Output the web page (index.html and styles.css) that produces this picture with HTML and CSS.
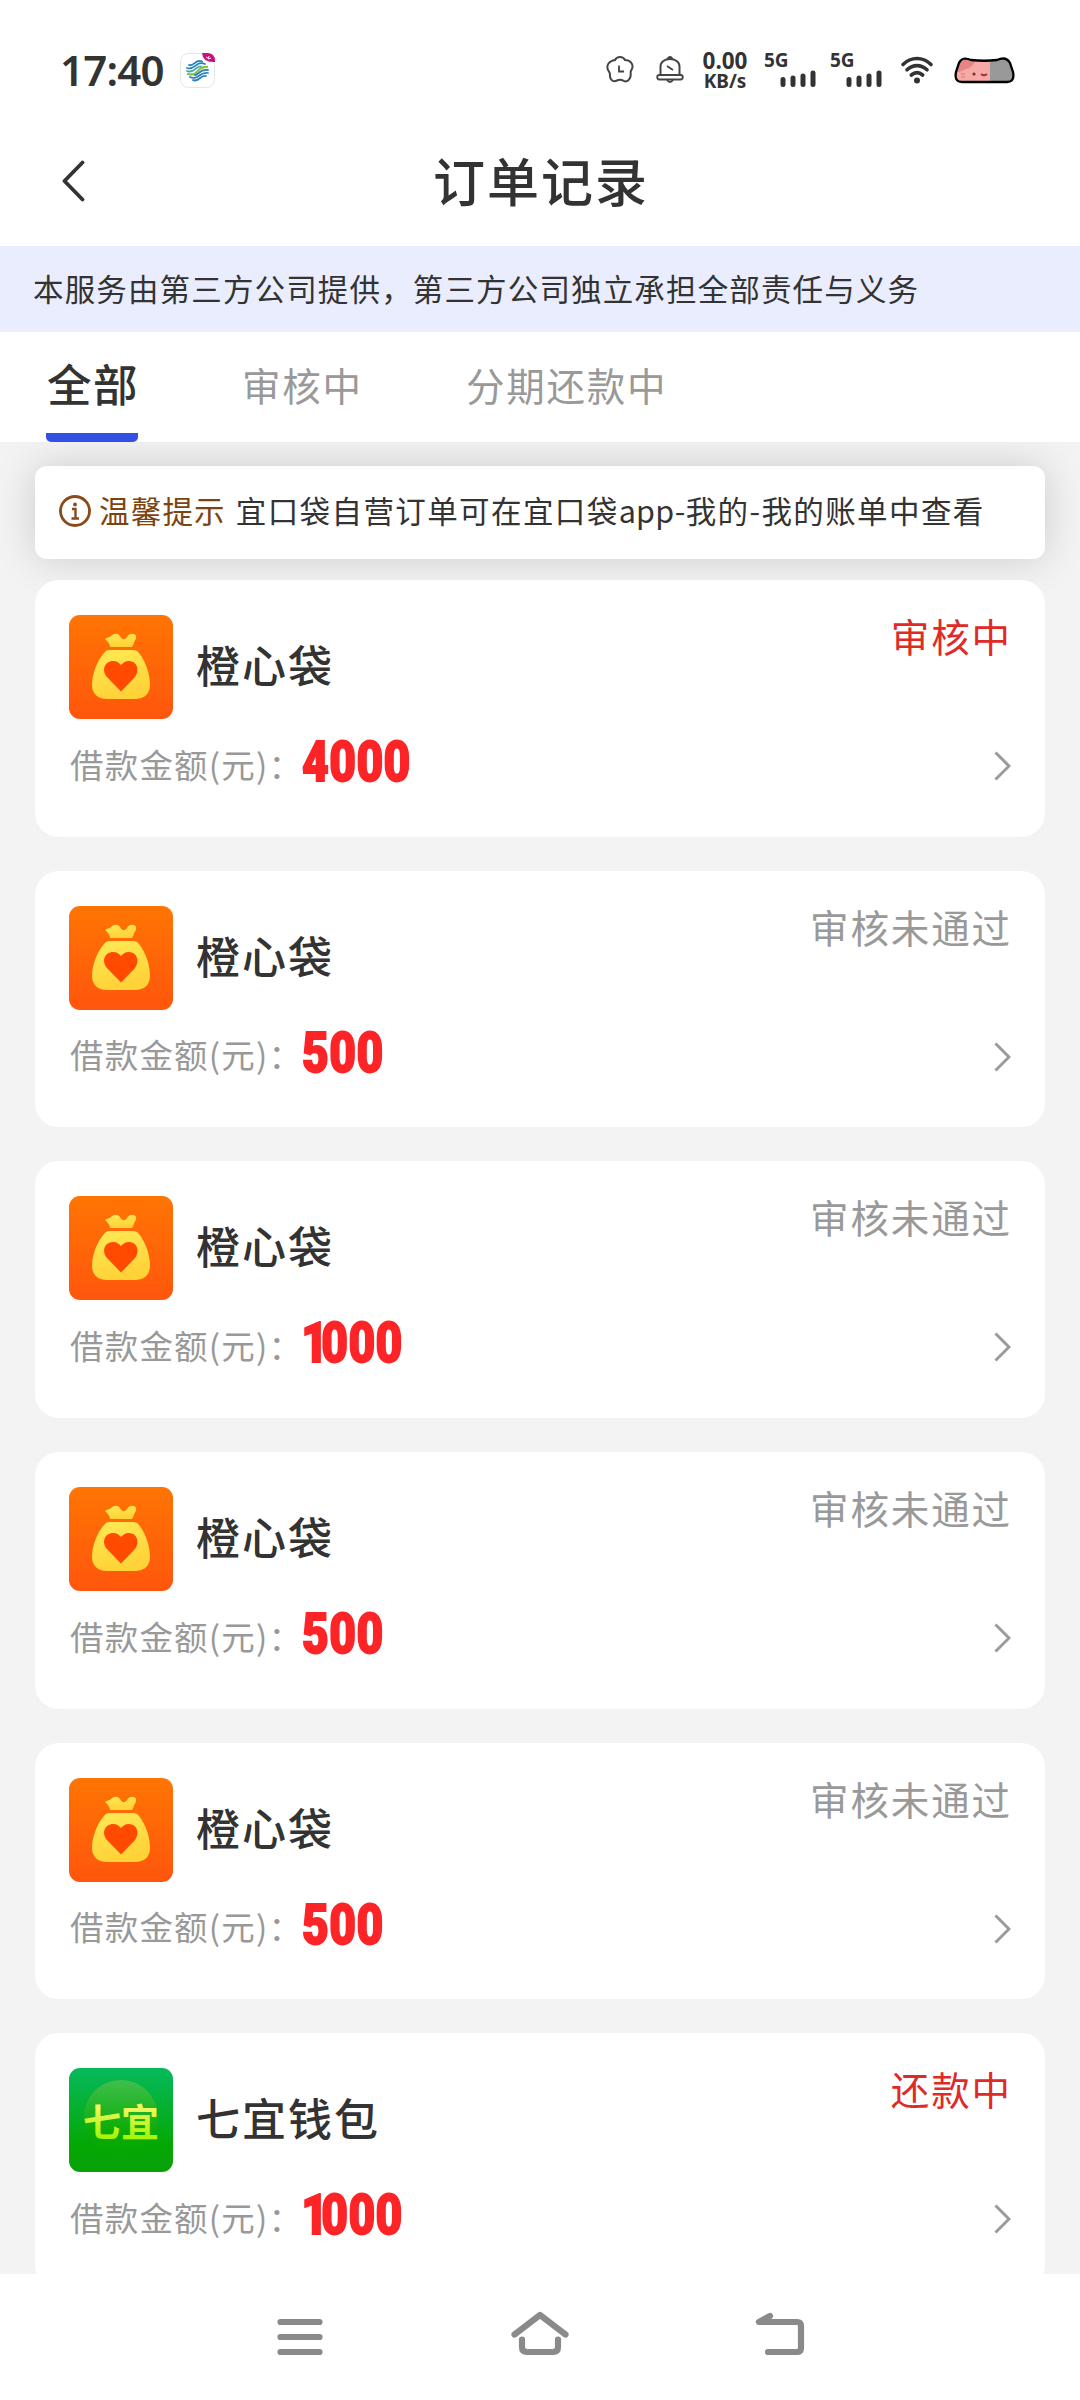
FILE: index.html
```html
<!DOCTYPE html>
<html lang="zh-CN">
<head>
    <meta charset="UTF-8">
    <meta name="viewport" content="width=device-width, initial-scale=1.0">
    <title>订单记录</title>
    <link rel="stylesheet" href="styles.css">
</head>
<body>
    <!-- shared icons -->
    <svg class="defs" width="0" height="0">
        <defs>
            <linearGradient id="orangeBg" x1="0" y1="0" x2="0" y2="1">
                <stop offset="0" stop-color="#ff7503"/>
                <stop offset="1" stop-color="#ff560d"/>
            </linearGradient>
            <linearGradient id="gold" x1="0" y1="0" x2="0.3" y2="1">
                <stop offset="0" stop-color="#ffea55"/>
                <stop offset="1" stop-color="#ffd238"/>
            </linearGradient>
            <linearGradient id="greenBg" x1="0" y1="0" x2="0" y2="1">
                <stop offset="0" stop-color="#06b95c"/>
                <stop offset="0.75" stop-color="#04a803"/>
                <stop offset="1" stop-color="#0aa00c"/>
            </linearGradient>
            <linearGradient id="greenBall" x1="0" y1="0" x2="0" y2="1">
                <stop offset="0" stop-color="#3fbf4c"/>
                <stop offset="0.7" stop-color="#0cab06"/>
                <stop offset="1" stop-color="#04a803"/>
            </linearGradient>
            <linearGradient id="lime" x1="0" y1="0" x2="0" y2="1">
                <stop offset="0.2" stop-color="#fbf96a"/>
                <stop offset="0.8" stop-color="#a8f50a"/>
            </linearGradient>
        </defs>
        <symbol id="bag" viewBox="0 0 104 104">
            <rect width="104" height="104" rx="11" fill="url(#orangeBg)"/>
            <path d="M36 24C38 22 40 23 42 21C45 18 49 18 51 21C53 25 56 25 58 22C60 18 66 18 67 21C68 24 65 26 65 28L63 32H41C41 29 39 27 36 24Z" fill="url(#gold)"/>
            <path d="M40 35H64Q68 35 70 38C77 47 81 59 81 70C81 79 75 84 66 84H38C28 84 23 78 23 70C23 59 28 46 35 38Q37 35 40 35Z" fill="url(#gold)"/>
            <path d="M52 76.500L38 62C32 55 36 46 44 46C48 46 50 48 52 50C54 48 56 46 60 46C68 46 71 55 66 62Z" fill="#ff4a00"/>
        </symbol>
        <symbol id="arrow" viewBox="0 0 17 30">
            <path d="M1.500 1.500L15 15L1.500 28.500" fill="none" stroke="#9b9b9b" stroke-width="3"/>
        </symbol>
        <symbol id="signal" viewBox="0 0 36 17">
            <path d="M3 9.500V14.500M13 8V14.500M23 6V14.500M33 3V14.500" fill="none" stroke="#333" stroke-width="5" stroke-linecap="round"/>
        </symbol>
    </svg>

    <div class="status-bar">
        <span class="time">17:40</span>
        <svg class="carrier" viewBox="0 0 35 35">
            <rect x="0.500" y="0.500" width="34" height="34" rx="8" fill="#fff" stroke="#e6e6e6"/>
            <path d="M22 0H27Q35 0 35 8V9Q23 10 22 0Z" fill="#c9107f"/>
            <path d="M26 4L28 5M29 3L28 6L31 5" stroke="#fff" stroke-width="0.900" fill="none"/>
            <g fill="none" stroke-width="1.800" stroke-linecap="round">
                <path d="M9 12C14 14 16 5 22 8.500" stroke="#2483bd"/>
                <path d="M7 15C15 18 16 7 25 11" stroke="#2483bd"/>
                <path d="M7 18C15 21 16 12 21 13.500" stroke="#4ea2b0"/>
                <path d="M8 21C19 24 16 13 27 14" stroke="#8ac43c" stroke-width="2.300"/>
                <path d="M15 22C19 22 19 16 28 17" stroke="#2483bd"/>
                <path d="M10 24C18 28 20 18 28 20" stroke="#2483bd"/>
                <path d="M13 27C18 30 21 21 26 23" stroke="#2483bd"/>
            </g>
        </svg>

        <div class="status-icons">
            <svg class="alarm" viewBox="0 0 28 28">
                <path d="M9 4C11 0 17 0 19 4C24 4 28 8 26 13C23 16 26 18 24 22C22 26 19 26 17 24.500C15 23.500 13 23.500 11 24.500C8 26 5 25 4 21C4 17 4 17 2 14C0 9 3 5 9 4Z" fill="none" stroke="#444" stroke-width="2"/>
                <path d="M13 9.500V15.500H18" fill="none" stroke="#444" stroke-width="1.800"/>
            </svg>
            <svg class="bell" viewBox="0 0 28 28">
                <path d="M4.500 19V10.500C4.500 6 9 3 14 3C19 3 23.500 6 23.500 10.500V19M11.500 3Q14 -1 16.500 3M11 24Q14 28 17 24" fill="none" stroke="#444" stroke-width="2"/>
                <rect x="1.200" y="19" width="25.600" height="4.500" rx="2.200" fill="none" stroke="#444" stroke-width="1.800"/>
                <path d="M11 10L17 14" stroke="#444" stroke-width="1.800"/>
            </svg>
            <div class="speed"><b>0.00</b><i>KB/s</i></div>
            <div class="sim"><b>5G</b><svg><use href="#signal"/></svg></div>
            <div class="sim"><b>5G</b><svg><use href="#signal"/></svg></div>
            <svg class="wifi" viewBox="0 0 34 28">
                <path d="M3 8.500C11 0.500 23 0.500 31 8.500M7 13.800C13 8.200 21 8.200 27 13.800M11.300 19C15 15.900 19 15.900 22.700 19" fill="none" stroke="#333" stroke-width="3.600" stroke-linecap="round"/>
                <circle cx="17" cy="24.500" r="3" fill="#333"/>
            </svg>
            <svg class="battery" viewBox="0 0 61 27">
                <clipPath id="cat"><path d="M5 6Q8 -1 17 3Q30 4.500 43 3Q52 -1 56 6L59 15Q61 25 53 25H8Q0 25 2 15Z"/></clipPath>
                <g clip-path="url(#cat)">
                    <rect width="61" height="27" fill="#f6aaa8"/>
                    <path d="M0 0H22Q21 10 12 12Q5 15 0 17Z" fill="#e78489"/>
                    <rect x="36" width="25" height="27" fill="#999"/>
                </g>
                <circle cx="20" cy="17" r="1.600" fill="#8d2b25"/>
                <path d="M27 17Q30 19.500 33 17" stroke="#a8373f" stroke-width="2.200" fill="none"/>
                <path d="M7 17H11M7 20H11" stroke="#e78489" stroke-width="1.500"/>
                <path d="M5 6Q8 -1 17 3Q30 4.500 43 3Q52 -1 56 6L59 15Q61 25 53 25H8Q0 25 2 15Z" fill="none" stroke="#000" stroke-width="2.300"/>
            </svg>
        </div>
    </div>

    <header class="header">
        <svg class="back" viewBox="0 0 24 42">
            <path d="M21.500 2.500L3.500 21L21.500 39.500" fill="none" stroke="#333" stroke-width="3.800" stroke-linecap="round" stroke-linejoin="round"/>
        </svg>
        <h1>订单记录</h1>
    </header>

    <p class="notice">本服务由第三方公司提供，第三方公司独立承担全部责任与义务</p>

    <nav class="tabs">
        <a class="tab active">全部</a>
        <a class="tab">审核中</a>
        <a class="tab">分期还款中</a>
    </nav>

    <main class="content">
        <div class="tip">
            <svg class="info" viewBox="0 0 32 32">
                <circle cx="16" cy="16" r="14.500" fill="none" stroke="#8a4a1c" stroke-width="2.800"/>
                <circle cx="16" cy="9.500" r="1.900" fill="#8a4a1c"/>
                <path d="M13 14H16.500V23M12.500 23.500H20" fill="none" stroke="#8a4a1c" stroke-width="2.400"/>
            </svg>
            <b>温馨提示</b>
            <span>宜口袋自营订单可在宜口袋<span class="latin">app-</span>我的-我的账单中查看</span>
        </div>

        <div class="orders">
            <section class="order">
                <div class="order-top">
                    <svg class="logo"><use href="#bag"/></svg>
                    <h2>橙心袋</h2>
                    <span class="state red">审核中</span>
                </div>
                <div class="order-bottom">
                    <span class="label">借款金额(元)：</span>
                    <span class="amount">4000</span>
                    <svg class="arrow"><use href="#arrow"/></svg>
                </div>
            </section>

            <section class="order">
                <div class="order-top">
                    <svg class="logo"><use href="#bag"/></svg>
                    <h2>橙心袋</h2>
                    <span class="state">审核未通过</span>
                </div>
                <div class="order-bottom">
                    <span class="label">借款金额(元)：</span>
                    <span class="amount">500</span>
                    <svg class="arrow"><use href="#arrow"/></svg>
                </div>
            </section>

            <section class="order">
                <div class="order-top">
                    <svg class="logo"><use href="#bag"/></svg>
                    <h2>橙心袋</h2>
                    <span class="state">审核未通过</span>
                </div>
                <div class="order-bottom">
                    <span class="label">借款金额(元)：</span>
                    <span class="amount"><span class="one">1</span>000</span>
                    <svg class="arrow"><use href="#arrow"/></svg>
                </div>
            </section>

            <section class="order">
                <div class="order-top">
                    <svg class="logo"><use href="#bag"/></svg>
                    <h2>橙心袋</h2>
                    <span class="state">审核未通过</span>
                </div>
                <div class="order-bottom">
                    <span class="label">借款金额(元)：</span>
                    <span class="amount">500</span>
                    <svg class="arrow"><use href="#arrow"/></svg>
                </div>
            </section>

            <section class="order">
                <div class="order-top">
                    <svg class="logo"><use href="#bag"/></svg>
                    <h2>橙心袋</h2>
                    <span class="state">审核未通过</span>
                </div>
                <div class="order-bottom">
                    <span class="label">借款金额(元)：</span>
                    <span class="amount">500</span>
                    <svg class="arrow"><use href="#arrow"/></svg>
                </div>
            </section>

            <section class="order">
                <div class="order-top">
                    <svg class="logo" viewBox="0 0 104 104">
                        <rect width="104" height="104" rx="11" fill="url(#greenBg)"/>
                        <circle cx="52" cy="49" r="37" fill="url(#greenBall)"/>
                        <text class="logo-text" x="14" y="68" fill="url(#lime)">七宜</text>
                    </svg>
                    <h2>七宜钱包</h2>
                    <span class="state red">还款中</span>
                </div>
                <div class="order-bottom">
                    <span class="label">借款金额(元)：</span>
                    <span class="amount"><span class="one">1</span>000</span>
                    <svg class="arrow"><use href="#arrow"/></svg>
                </div>
            </section>
        </div>
    </main>

    <footer class="nav-bar">
        <svg viewBox="0 0 60 50">
            <path d="M10.500 12H49.500M10.500 27H49.500M10.500 42H49.500"/>
        </svg>
        <svg viewBox="0 0 60 50">
            <path d="M4.500 24.500L30 5L55.500 24.500M12 29.500V37Q12 42 17 42H43Q48 42 48 37V29.500"/>
        </svg>
        <svg viewBox="0 0 60 50">
            <path d="M20 6L9 12H47Q51 12 51 16V38Q51 42 47 42H18"/>
        </svg>
    </footer>
</body>
</html>
```
FILE: styles.css
```css
* {
    box-sizing: border-box;
}

body {
    margin: 0;
    height: 2400px;
    display: flex;
    flex-direction: column;
    overflow: hidden;
    background: #fff;
    color: #333;
    font-family: "Noto Sans CJK SC", sans-serif;
}

h1, h2, p {
    margin: 0;
    font-weight: 500;
}

svg {
    display: block;
    flex-shrink: 0;
}

.defs {
    position: absolute;
}

/* status bar */
.status-bar {
    height: 116px;
    padding: 24px 65px 0 60px;
    display: flex;
    align-items: center;
    font-family: "Noto Sans", sans-serif;
}

.time {
    font-size: 42px;
    font-weight: 600;
    line-height: 60px;
    width: 120px;
    letter-spacing: -0.8px;
}

.carrier {
    width: 35px;
    height: 35px;
}

.status-icons {
    margin-left: auto;
    display: flex;
    align-items: center;
}

.alarm {
    width: 28px;
    height: 28px;
    margin-right: 22px;
}

.bell {
    width: 28px;
    height: 28px;
    margin-right: 17px;
}

.speed {
    width: 48px;
    height: 43px;
    margin-right: 15px;
    display: flex;
    flex-direction: column;
    align-items: center;
    white-space: nowrap;
}

.speed b, .speed i {
    font-style: normal;
    font-weight: 700;
    font-size: 22.5px;
    line-height: 23px;
}

.speed i {
    font-size: 19px;
    line-height: 19px;
}

.sim {
    width: 51px;
    height: 36px;
    margin-right: 15px;
}

.sim b {
    display: block;
    font-size: 19px;
    line-height: 17px;
    height: 18px;
}

.sim svg {
    width: 36px;
    height: 17px;
    margin-left: 16px;
}

.wifi {
    width: 34px;
    height: 28px;
    margin-right: 20px;
    margin-left: 4px;
}

.battery {
    width: 61px;
    height: 27px;
}

/* title */
.header {
    height: 130px;
    padding: 0 61px;
    display: grid;
    grid-template-columns: 24px 1fr 24px;
    align-items: center;
}

.back {
    width: 24px;
    height: 42px;
}

.header h1 {
    font-size: 52px;
    line-height: 74px;
    padding-bottom: 2px;
    letter-spacing: 2px;
    text-indent: 2px;
    text-align: center;
}

.notice {
    height: 86px;
    padding-left: 33px;
    background: #eaedfd;
    font-size: 30.5px;
    font-weight: 400;
    line-height: 84px;
    letter-spacing: 1.150px;
    white-space: nowrap;
}

/* tabs */
.tabs {
    height: 110px;
    padding-left: 46px;
    display: flex;
    gap: 104px;
    white-space: nowrap;
}

.tab {
    color: #999;
    font-size: 38.5px;
    line-height: 105px;
    letter-spacing: 1.800px;
}

.tab:last-child {
    margin-left: -1px;
}

.tab.active {
    width: 92px;
    padding-left: 1px;
    color: #333;
    font-size: 44.5px;
    font-weight: 500;
    line-height: 101px;
    letter-spacing: 1.500px;
    background: linear-gradient(#3450e4, #3450e4) bottom / 100% 9px no-repeat;
    border-radius: 5px;
}

/* list */
.content {
    flex: 1;
    min-height: 0;
    overflow: hidden;
    padding: 24px 35px 0;
    background: #f3f3f3;
}

.tip {
    height: 93px;
    padding-left: 24px;
    display: flex;
    align-items: center;
    background: #fff;
    border-radius: 12px;
    box-shadow: 0 0 42px rgba(0, 0, 0, 0.16);
    font-size: 30.5px;
    line-height: 44px;
    letter-spacing: 1.400px;
    white-space: nowrap;
}

.info {
    width: 32px;
    height: 32px;
    margin: 0 8px 3px 0;
}

.tip b {
    margin-right: 10px;
    color: #7d4310;
    font-weight: 400;
    letter-spacing: 1.200px;
}

.tip b, .tip span {
    padding-bottom: 5px;
}

.tip .latin {
    letter-spacing: 0.300px;
}

.orders {
    margin-top: 21px;
    display: flex;
    flex-direction: column;
    gap: 34px;
}

.order {
    height: 256.700px;
    padding: 35px 34px 0;
    flex-shrink: 0;
    position: relative;
    background: #fff;
    border-radius: 24px;
}

.order-top {
    height: 104px;
    display: flex;
    align-items: center;
}

.logo {
    width: 104px;
    height: 104px;
}

.logo-text {
    font-size: 38px;
    font-weight: 700;
}

.order h2 {
    margin-left: 23px;
    padding-bottom: 6px;
    font-size: 44px;
    line-height: 60px;
    letter-spacing: 2px;
}

.state {
    margin: 0 -1px 0 auto;
    align-self: flex-start;
    color: #999;
    font-size: 38.5px;
    line-height: 41px;
    letter-spacing: 1.900px;
}

.state.red {
    color: #e02a28;
}

.order-bottom {
    height: 86px;
    display: flex;
    align-items: center;
}

.label {
    width: 233px;
    padding: 3px 0 0 1px;
    color: #999;
    font-size: 33.5px;
    line-height: 50px;
    letter-spacing: 1.200px;
    white-space: nowrap;
}

.amount {
    color: #fd2427;
    font-family: Roboto, sans-serif;
    font-size: 55px;
    font-weight: 900;
    line-height: 60px;
    letter-spacing: 0.500px;
    -webkit-text-stroke: 1.800px #fd2427;
    transform: scaleX(0.840);
    transform-origin: left;
}

.one {
    letter-spacing: -8px;
    margin-left: -1px;
}

.arrow {
    width: 17px;
    height: 30px;
    margin: 8px 0 0 auto;
}

/* system navigation */
.nav-bar {
    height: 126px;
    display: flex;
    justify-content: center;
    gap: 180px;
    padding-top: 36px;
}

.nav-bar svg {
    width: 60px;
    height: 50px;
    fill: none;
    stroke: #8a8a8a;
    stroke-width: 6.200;
    stroke-linecap: round;
    stroke-linejoin: round;
}
```
